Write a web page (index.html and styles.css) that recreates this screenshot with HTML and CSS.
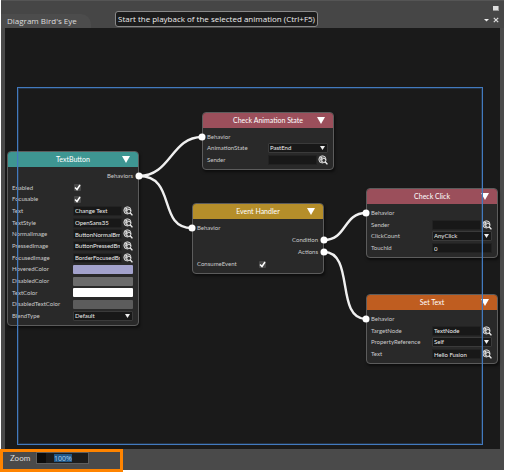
FILE: index.html
```
<!DOCTYPE html>
<html lang="en">
<head>
<meta charset="utf-8">
<title>Diagram Bird's Eye</title>
<link rel="stylesheet" href="styles.css">
</head>
<body>
<svg class="defs" aria-hidden="true">
  <symbol id="picker" viewBox="0 0 10 10">
    <circle cx="4.4" cy="4.4" r="3.6" fill="#666" stroke="#ccc"/>
    <path d="M1.5 3.2 4 2.4 3.4 4.6 1.6 5M3.4 5.6 4.4 7.4" fill="none" stroke="#eee" stroke-width=".9"/>
    <circle cx="5.8" cy="5.4" r="2" fill="#333" stroke="#eee" stroke-width=".9"/>
    <path d="M7.2 6.8 9.4 9.4" stroke="#eee" stroke-width="1.4"/>
  </symbol>
  <symbol id="collapse" viewBox="0 0 8 7"><path d="M0 0h8L4 7z" fill="#fff"/></symbol>
</svg>
<div class="window">
  <header class="titlebar">
    <h1 class="tab">Diagram Bird's Eye</h1>
    <div class="tooltip" role="tooltip">Start the playback of the selected animation (Ctrl+F5)</div>
    <div class="window-buttons">
      <button class="icon" aria-label="Maximize"><svg viewBox="0 0 6 6"><path d="M0 0h6v5H0z" fill="#999"/><path d="M0 0h5v4H0z" fill="#ddd"/></svg></button>
      <div class="pane-buttons">
        <button class="icon" aria-label="Pane menu"><svg viewBox="0 0 6 6"><path d="M0 2h5L2.5 4.5z" fill="#eee"/></svg></button>
        <button class="icon" aria-label="Close pane"><svg viewBox="0 0 6 6"><path d="M.8.8 5.2 5.2M5.2.8.8 5.2" stroke="#ddd" stroke-width="1.2"/></svg></button>
      </div>
    </div>
  </header>

  <main class="canvas">
    <section class="node teal text-button">
      <h2>TextButton<button class="icon" aria-label="Collapse"><svg><use href="#collapse"/></svg></button></h2>
      <div class="rows">
        <div class="out">Behaviors</div>
        <div class="row"><label for="b1">Enabled</label><input id="b1" type="checkbox" checked></div>
        <div class="row"><label for="b2">Focusable</label><input id="b2" type="checkbox" checked></div>
        <div class="row"><label for="b3">Text</label><input id="b3" type="text" value="Change Text"><button class="icon" aria-label="Pick"><svg><use href="#picker"/></svg></button></div>
        <div class="row"><label for="b4">TextStyle</label><input id="b4" type="text" value="OpenSans35"><button class="icon" aria-label="Pick"><svg><use href="#picker"/></svg></button></div>
        <div class="row"><label for="b5">NormalImage</label><input id="b5" type="text" value="ButtonNormalBmp"><button class="icon" aria-label="Pick"><svg><use href="#picker"/></svg></button></div>
        <div class="row"><label for="b6">PressedImage</label><input id="b6" type="text" value="ButtonPressedBmp"><button class="icon" aria-label="Pick"><svg><use href="#picker"/></svg></button></div>
        <div class="row"><label for="b7">FocusedImage</label><input id="b7" type="text" value="BorderFocusedBmp"><button class="icon" aria-label="Pick"><svg><use href="#picker"/></svg></button></div>
        <div class="row"><label for="b8">HoveredColor</label><button id="b8" class="swatch lilac"></button></div>
        <div class="row"><label for="b9">DisabledColor</label><button id="b9" class="swatch gray"></button></div>
        <div class="row"><label for="b10">TextColor</label><button id="b10" class="swatch white"></button></div>
        <div class="row"><label for="b11">DisabledTextColor</label><button id="b11" class="swatch dim"></button></div>
        <div class="row"><label for="b12">BlendType</label><select id="b12"><option>Default</option></select></div>
      </div>
    </section>

    <section class="node rose animation-state">
      <h2>Check Animation State<button class="icon" aria-label="Collapse"><svg><use href="#collapse"/></svg></button></h2>
      <div class="rows">
        <div class="in">Behavior</div>
        <div class="row"><label for="a1">AnimationState</label><select id="a1"><option>PastEnd</option></select></div>
        <div class="row"><label for="a2">Sender</label><input id="a2" type="text"><button class="icon" aria-label="Pick"><svg><use href="#picker"/></svg></button></div>
      </div>
    </section>

    <section class="node gold event-handler">
      <h2>Event Handler<button class="icon" aria-label="Collapse"><svg><use href="#collapse"/></svg></button></h2>
      <div class="rows">
        <div class="in">Behavior</div>
        <div class="out">Condition</div>
        <div class="out">Actions</div>
        <div class="row"><label for="e1">ConsumeEvent</label><input id="e1" type="checkbox" checked></div>
      </div>
    </section>

    <section class="node rose check-click">
      <h2>Check Click<button class="icon" aria-label="Collapse"><svg><use href="#collapse"/></svg></button></h2>
      <div class="rows">
        <div class="in">Behavior</div>
        <div class="row"><label for="c1">Sender</label><input id="c1" type="text"><button class="icon" aria-label="Pick"><svg><use href="#picker"/></svg></button></div>
        <div class="row"><label for="c2">ClickCount</label><select id="c2"><option>AnyClick</option></select></div>
        <div class="row"><label for="c3">TouchId</label><input id="c3" class="wide" type="text" value="0"></div>
      </div>
    </section>

    <section class="node orange set-text">
      <h2>Set Text<button class="icon" aria-label="Collapse"><svg><use href="#collapse"/></svg></button></h2>
      <div class="rows">
        <div class="in">Behavior</div>
        <div class="row"><label for="s1">TargetNode</label><input id="s1" type="text" value="TextNode"><button class="icon" aria-label="Pick"><svg><use href="#picker"/></svg></button></div>
        <div class="row"><label for="s2">PropertyReference</label><select id="s2"><option>Self</option></select></div>
        <div class="row"><label for="s3">Text</label><input id="s3" type="text" value="Hello Fusion"><button class="icon" aria-label="Pick"><svg><use href="#picker"/></svg></button></div>
      </div>
    </section>

    <svg class="wires" aria-hidden="true">
      <g fill="none" stroke="#f0f0f0" stroke-width="2.4">
        <path d="M134 148C166 148 166 109 197 109"/>
        <path d="M134 148C172 148 152 200 187 200"/>
        <path d="M319 212C342 212 338 185 361 185"/>
        <path d="M319 224C350 224 330 291 361 291"/>
      </g>
      <g fill="#fff">
        <circle cx="134" cy="148" r="3.5"/><circle cx="197" cy="109" r="3.5"/>
        <circle cx="187" cy="200" r="3.5"/><circle cx="319" cy="212" r="3.5"/>
        <circle cx="319" cy="224" r="3.5"/><circle cx="361" cy="185" r="3.5"/>
        <circle cx="361" cy="291" r="3.5"/>
      </g>
    </svg>
    <div class="viewport"></div>
  </main>

  <footer class="statusbar">
    <label for="zoom">Zoom</label>
    <input id="zoom" type="text" value="100%">
  </footer>
  <div class="callout"></div>
</div>
</body>
</html>
```
FILE: styles.css
```
* { box-sizing: border-box; }

body {
  margin: 0;
  background: #fff;
  color: #ddd;
  font-family: Lato, "Open Sans", sans-serif;
}

h1, h2 { margin: 0; font-weight: 400; }

.defs { position: absolute; width: 0; height: 0; }

.window {
  position: relative;
  display: flex;
  flex-direction: column;
  min-height: 100vh;
  padding: 0 1px 2px;
}

.icon {
  display: block;
  width: 6px;
  height: 6px;
  padding: 0;
  border: 0;
  background: none;
}
.icon svg { display: block; width: 100%; height: 100%; }

.titlebar {
  position: relative;
  display: flex;
  justify-content: space-between;
  height: 28px;
  border-top: 1px solid #555;
  background: #464646;
}
.tab {
  align-self: flex-end;
  height: 14px;
  padding: 0 14px 0 6px;
  border-radius: 0 10px 0 0;
  background: #4c4c4c;
  font: 8px/14px "Open Sans", sans-serif;
}
.tooltip {
  position: absolute;
  left: 114px;
  top: 10px;
  height: 16px;
  padding: 0 2px;
  border: 1px solid #888;
  border-radius: 3px;
  background: #1c1c1c;
  color: #eee;
  font: 8px/14px "Open Sans", sans-serif;
  white-space: nowrap;
  z-index: 1;
}
.window-buttons {
  display: flex;
  flex-direction: column;
  align-items: flex-end;
  gap: 5px;
  padding: 5px 5px 0 0;
}
.pane-buttons { display: flex; gap: 3px; }

.canvas {
  position: relative;
  flex: 1;
  min-height: 421px;
  background: #1a1a1a;
  border: solid #4a4a4a;
  border-width: 0 4px;
}

.node {
  position: absolute;
  display: flex;
  flex-direction: column;
  width: 132px;
  border: 1px solid #5c5c5c;
  border-radius: 4px;
  background: #292929;
  box-shadow: 1px 2px 3px #0008;
  font-size: 6px;
  line-height: 10px;
  overflow: hidden;
}
.text-button { left: 2px; top: 123px; height: 175px; }
.animation-state { left: 197px; top: 84px; height: 58px; }
.event-handler { left: 187px; top: 175px; height: 71px; }
.check-click { left: 361px; top: 160px; height: 70px; }
.set-text { left: 361px; top: 266px; height: 70px; }

.node h2 {
  position: relative;
  font-size: 7px;
  line-height: 15px;
  text-align: center;
  color: #fff;
}
.node h2 .icon {
  position: absolute;
  right: 8px;
  top: 4px;
  width: 8px;
  height: 7px;
}
.teal h2 { background: #3e9692; }
.rose h2 { background: #9b4f5b; }
.gold h2 { background: #b58e2a; }
.orange h2 { background: #bf5d20; }

.rows {
  flex: 1;
  display: grid;
  grid-auto-rows: 1fr;
  align-items: center;
  padding: 3px 5px 3px 4px;
  color: #ccc;
}
.out { text-align: right; }
.row {
  display: grid;
  grid-template-columns: 60px 49px 10px;
  column-gap: 1px;
  align-items: center;
  height: 10px;
}
.row label { white-space: nowrap; }
.row input, .row select {
  appearance: none;
  width: 100%;
  height: 10px;
  margin: 0;
  padding: 0 1px;
  border: 1px solid #222;
  border-radius: 1px;
  outline: 0;
  background: #181818;
  color: #eee;
  font: 6px/8px Lato, sans-serif;
}
.row .wide, .row select, .swatch { grid-column: 2 / 4; }
.row select {
  border-color: #3a3a3a;
  background: #181818 url("data:image/svg+xml,%3Csvg xmlns='http://www.w3.org/2000/svg' width='5' height='4'%3E%3Cpath d='M0 0h5L2.5 4z' fill='%23eee'/%3E%3C/svg%3E") no-repeat right 2px center;
}
.row input[type="checkbox"] {
  width: 7px;
  height: 7px;
  margin-left: 1px;
  padding: 0;
  border: 0;
  background: #484848 url("data:image/svg+xml,%3Csvg xmlns='http://www.w3.org/2000/svg' width='7' height='7'%3E%3Cpath d='M1 3.5 3 5.5 6 1' fill='none' stroke='%23fff' stroke-width='1.5'/%3E%3C/svg%3E") no-repeat;
}
.row .icon { width: 10px; height: 10px; }
.swatch { height: 9px; padding: 0; border: 0; border-radius: 1px; }
.lilac { background: #a3a2cc; }
.gray { background: #6b6b6b; }
.white { background: #fff; }
.dim { background: #5c5c5c; }

.wires { position: absolute; inset: 0; width: 100%; height: 100%; pointer-events: none; }
.viewport {
  position: absolute;
  inset: 59px 17px 4px 12px;
  border: 1px solid #427abf;
  box-shadow: inset 0 0 0 1px #427abf40;
  pointer-events: none;
}

.statusbar {
  display: flex;
  align-items: flex-start;
  gap: 6px;
  height: 21px;
  padding: 3px 9px;
  background: #4a4a4a;
  font-size: 8px;
  line-height: 12px;
}
.statusbar input {
  width: 53px;
  height: 12px;
  padding: 0;
  border: 1px solid #5e5e5e;
  outline: 0;
  background:
    linear-gradient(#1f5686, #1f5686) center / 18px 8px no-repeat,
    linear-gradient(90deg, #0c0c0c 9px, #1c1c1c 9px);
  color: #a8d2f2;
  font: 7px/10px "Open Sans", sans-serif;
  text-align: center;
}
.callout {
  position: absolute;
  left: 0;
  bottom: 0;
  width: 123px;
  height: 23px;
  border: 3px solid #ff8400;
  pointer-events: none;
}
```
